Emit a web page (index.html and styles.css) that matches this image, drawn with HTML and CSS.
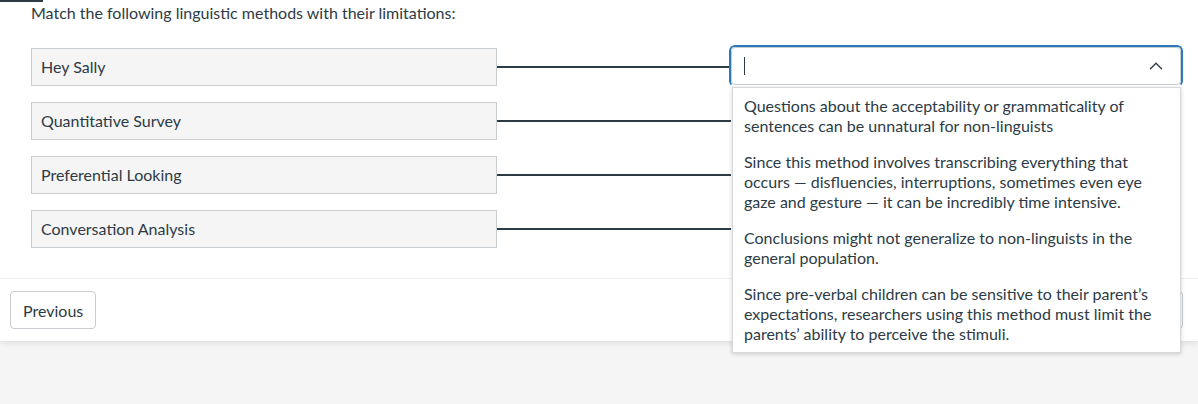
FILE: index.html
```html
<!DOCTYPE html>
<html lang="en">
<head>
    <meta charset="UTF-8">
    <title>Matching Question</title>
    <link rel="stylesheet" href="styles.css">
</head>
<body>
    <div class="page">
        <div class="top-rule"></div>
        <div class="question">
            <p class="question-text">Match the following linguistic methods with their limitations:</p>
            <div class="match-list">
                <div class="match-row">
                    <div class="match-term">Hey Sally</div>
                    <div class="connector"></div>
                    <div class="match-answer">
                        <div class="select focused">
                            <div class="select-input">
                                <span class="text-caret"></span>
                                <svg class="chevron" width="14" height="8" viewBox="0 0 14 8">
                                    <path d="M1 7.2 L7 1.2 L13 7.2" fill="none" stroke="#2d3b45" stroke-width="1.3"/>
                                </svg>
                            </div>
                        </div>
                        <!-- lista desplegada del select -->
                        <ul class="options">
                            <li>Questions about the acceptability or grammaticality of sentences can be unnatural for non-linguists</li>
                            <li>Since this method involves transcribing everything that occurs — disfluencies, interruptions, sometimes even eye gaze and gesture — it can be incredibly time intensive.</li>
                            <li>Conclusions might not generalize to non-linguists in the general population.</li>
                            <li>Since pre-verbal children can be sensitive to their parent’s expectations, researchers using this method must limit the parents’ ability to perceive the stimuli.</li>
                        </ul>
                    </div>
                </div>
                <div class="match-row">
                    <div class="match-term">Quantitative Survey</div>
                    <div class="connector"></div>
                    <div class="match-answer"></div>
                </div>
                <div class="match-row">
                    <div class="match-term">Preferential Looking</div>
                    <div class="connector"></div>
                    <div class="match-answer"></div>
                </div>
                <div class="match-row">
                    <div class="match-term">Conversation Analysis</div>
                    <div class="connector"></div>
                    <div class="match-answer"></div>
                </div>
            </div>
        </div>
        <div class="footer">
            <button class="btn">Previous</button>
            <button class="btn">Next</button>
        </div>
    </div>
</body>
</html>
```

FILE: styles.css
```css
html, body {
    min-height: 100%;
}
body {
    margin: 0;
    min-height: 100vh;
    font-family: Lato, "Open Sans", sans-serif;
    background-color: #f5f5f5;
    color: #2d3b45;
}
.page {
    background: white;
    box-shadow: 0 2px 6px rgba(0, 0, 0, 0.1);
}
.top-rule {
    width: 43px;
    height: 2px;
    background: #2d3b45;
}
.question {
    padding: 0 16px 30px 31px;
}
.question-text {
    margin: 0;
    padding-top: 1px;
    font-size: 16px;
    line-height: 20px;
}
.match-list {
    display: flex;
    flex-direction: column;
    gap: 16px;
    margin-top: 25px;
}
.match-row {
    display: flex;
    align-items: center;
    height: 38px;
}
.match-term {
    box-sizing: border-box;
    width: 466px;
    height: 38px;
    flex-shrink: 0;
    display: flex;
    align-items: center;
    padding: 0 0 1px 9px;
    background: #f5f5f5;
    border: 1px solid #c7cdd1;
    font-size: 16px;
}
.connector {
    width: 234px;
    height: 2px;
    flex-shrink: 0;
    background: #2d3b45;
}
.match-answer {
    position: relative;
    z-index: 5;
    flex: 1;
    height: 38px;
}
.select {
    box-sizing: border-box;
    position: absolute;
    top: -3px;
    left: -2px;
    right: -1px;
    height: 42px;
    border: 2px solid transparent;
    border-radius: 6px;
}
.select.focused {
    border-color: #2b7abc;
    border-bottom-color: transparent;
}
.select-input {
    box-sizing: border-box;
    height: 100%;
    display: flex;
    align-items: center;
    justify-content: space-between;
    padding: 0 17px 0 12px;
    border: 1px solid #c7cdd1;
    border-radius: 4px;
}
.text-caret {
    width: 0;
    height: 18px;
    border-left: 1.5px solid #2d3b45;
}
.chevron {
    display: block;
}
/* lista de opciones sobre las filas siguientes */
.options {
    position: absolute;
    top: 39px;
    left: 1px;
    right: 1px;
    margin: 0;
    padding: 0;
    list-style: none;
    background: white;
    border: 1px solid #d5d9dc;
    box-shadow: 0 1px 4px rgba(0, 0, 0, 0.18);
}
.options li {
    padding: 8px 12px 8px 11px;
    font-size: 16px;
    line-height: 20px;
}
.footer {
    display: flex;
    justify-content: space-between;
    padding: 12px 15px 12px 10px;
    border-top: 1px solid #eef0f1;
}
.btn {
    height: 38px;
    padding: 0 12px;
    font-family: Lato, "Open Sans", sans-serif;
    font-size: 16px;
    color: #2d3b45;
    background: white;
    border: 1px solid #c7cdd1;
    border-radius: 4px;
}
```
